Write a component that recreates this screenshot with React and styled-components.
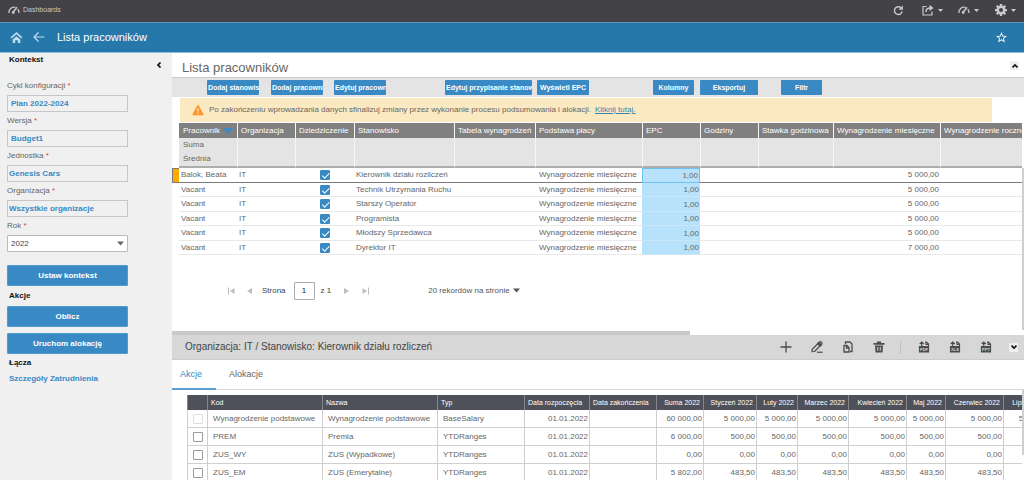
import React, { useState } from "react";
import styled, { createGlobalStyle, css } from "styled-components";
import { MdStarBorder } from "react-icons/md";

const blue = "#3889c4";

const GlobalStyle = createGlobalStyle`
  * {
    box-sizing: border-box;
  }
  body {
    margin: 0;
    background: #fff;
    color: #666;
    font-family: "Liberation Sans", Arial, sans-serif;
    font-size: 8px;
    line-height: 12px;
  }
  button,
  input,
  select {
    font: inherit;
    color: inherit;
    margin: 0;
  }
`;

const contextFields = [
  { id: "cycle", label: "Cykl konfiguracji", value: "Plan 2022-2024" },
  { id: "version", label: "Wersja", value: "Budget1" },
  { id: "unit", label: "Jednostka", value: "Genesis Cars", tight: true },
  {
    id: "organization",
    label: "Organizacja",
    value: "Wszystkie organizacje",
    tight: true,
  },
];

const toolbar = [
  { label: "Dodaj stanowisko", width: 52, gap: 35, cut: true },
  { label: "Dodaj pracownika", width: 52, gap: 12, cut: true },
  { label: "Edytuj pracownika", width: 52, gap: 11, cut: true },
  { label: "Edytuj przypisanie stanowiska", width: 87, gap: 59, cut: true },
  { label: "Wyświetl EPC", width: 52, gap: 5 },
  { label: "Kolumny", width: 41, gap: 64 },
  { label: "Eksportuj", width: 58, gap: 6 },
  { label: "Filtr", width: 41, gap: 23 },
];

const employeeColumns = [
  { name: "Pracownik", width: 58, sorted: true },
  { name: "Organizacja", width: 58 },
  { name: "Dziedziczenie", width: 59 },
  { name: "Stanowisko", width: 100 },
  { name: "Tabela wynagrodzeń", width: 81 },
  { name: "Podstawa płacy", width: 107 },
  { name: "EPC", width: 58 },
  { name: "Godziny", width: 58 },
  { name: "Stawka godzinowa", width: 75 },
  { name: "Wynagrodzenie miesięczne", width: 107 },
  { name: "Wynagrodzenie roczne" },
];

const employees = [
  { name: "Balok, Beata", position: "Kierownik działu rozliczeń", pay: "5 000,00" },
  { name: "Vacant", position: "Technik Utrzymania Ruchu", pay: "5 000,00" },
  { name: "Vacant", position: "Starszy Operator", pay: "5 000,00" },
  { name: "Vacant", position: "Programista", pay: "5 000,00" },
  { name: "Vacant", position: "Młodszy Sprzedawca", pay: "5 000,00" },
  { name: "Vacant", position: "Dyrektor IT", pay: "7 000,00" },
];

const actionColumns = [
  { name: "Kod", width: 115 },
  { name: "Nazwa", width: 115 },
  { name: "Typ", width: 87 },
  { name: "Data rozpoczęcia", width: 65 },
  { name: "Data zakończenia", width: 67 },
  { name: "Suma 2022", width: 47, right: true },
  { name: "Styczeń 2022", width: 53, right: true },
  { name: "Luty 2022", width: 41, right: true },
  { name: "Marzec 2022", width: 51, right: true },
  { name: "Kwiecień 2022", width: 58, right: true },
  { name: "Maj 2022", width: 39, right: true },
  { name: "Czerwiec 2022", width: 58, right: true },
  { name: "Lipiec 2022", right: true },
];

const actions = [
  {
    code: "Wynagrodzenie podstawowe",
    name: "Wynagrodzenie podstawowe",
    type: "BaseSalary",
    sum: "60 000,00",
    month: "5 000,00",
    disabled: true,
  },
  { code: "PREM", name: "Premia", type: "YTDRanges", sum: "6 000,00", month: "500,00" },
  { code: "ZUS_WY", name: "ZUS (Wypadkowe)", type: "YTDRanges", sum: "0,00", month: "0,00" },
  { code: "ZUS_EM", name: "ZUS (Emerytalne)", type: "YTDRanges", sum: "5 802,00", month: "483,50" },
];

const Page = styled.div`
  display: flex;
  flex-direction: column;
  height: 100vh;
  overflow: hidden;
`;

const IconButton = styled.button`
  display: inline-flex;
  align-items: center;
  justify-content: center;
  gap: ${(p) => p.$gap || 0}px;
  width: ${(p) => (p.$width ? `${p.$width}px` : "auto")};
  padding: 0;
  border: 0;
  background: none;
  color: inherit;
  cursor: pointer;

  svg {
    flex: none;
  }
`;

const TopBar = styled.header`
  display: flex;
  flex: none;
  align-items: center;
  justify-content: space-between;
  height: 22px;
  padding: 0 1px 2px 8px;
  background: #434347;
  color: #c9c9c9;
`;

const Brand = styled.a`
  display: flex;
  align-items: center;
  gap: 3px;
  color: inherit;
  font-size: 7px;
  text-decoration: none;
`;

const TopActions = styled.div`
  display: flex;
  align-items: center;
`;

const TitleBar = styled.div`
  display: flex;
  flex: none;
  align-items: center;
  height: 31px;
  padding: 0 16px 1px 10px;
  border-top: 1px solid #5e94b8;
  border-bottom: 1px solid #8fbcd8;
  background: #2678ab;
  color: #fff;

  h1 {
    flex: 1;
    margin: 0 0 0 12px;
    font-size: 11px;
    line-height: 16px;
    font-weight: normal;
  }
`;

const NavButton = styled(IconButton)`
  margin-right: ${(p) => p.$after || 0}px;
  color: #c4dced;
`;

const Body = styled.div`
  display: flex;
  flex: 1;
  min-height: 0;
`;

const Sidebar = styled.aside`
  flex: none;
  width: 172px;
  padding: 1px 7px 0;
  background: #f0f0f0;
`;

const SideHead = styled.div`
  display: flex;
  justify-content: space-between;
  align-items: flex-start;
  height: 23px;
  padding-right: 3px;

  button {
    margin-top: 8px;
    color: #111;
  }
`;

const SideTitle = styled.h2`
  margin: ${(p) => p.$top || 0}px 0 0;
  padding-left: 2px;
  color: #111;
  font-size: 8px;
  line-height: 12px;
  font-weight: bold;
`;

const SideForm = styled.form`
  width: 121px;
`;

const Label = styled.label`
  display: block;
  height: 18px;
  padding: 3px 0;

  span {
    color: #f33;
  }
`;

const TextInput = styled.input`
  display: block;
  width: 100%;
  height: 17px;
  padding: 0 ${(p) => (p.$tight ? 1 : 3)}px;
  border: 1px solid #c6c6c6;
  background: #f0f0f0;
  color: ${blue};
  font-weight: bold;
  outline: 0;
`;

const SelectBox = styled.div`
  position: relative;

  select {
    display: block;
    appearance: none;
    width: 100%;
    height: 17px;
    padding: 0 3px;
    border: 1px solid #b9b9b9;
    border-radius: 1px;
    background: #fff;
    color: #444;
  }

  svg {
    position: absolute;
    right: 4px;
    top: 5px;
    pointer-events: none;
  }
`;

const WideButton = styled.button`
  display: block;
  width: 121px;
  height: 21px;
  margin-top: ${(p) => p.$top}px;
  padding: 0;
  border: 1px solid #4f9dcf;
  border-radius: 1px;
  background: ${blue};
  color: #fff;
  font-weight: bold;
  cursor: pointer;
`;

const SideLink = styled.a`
  display: block;
  margin-top: 4px;
  padding-left: 2px;
  color: ${blue};
  font-weight: bold;
  text-decoration: none;
`;

const Main = styled.main`
  display: flex;
  flex: 1;
  flex-direction: column;
  min-width: 0;
`;

const PanelTitle = styled.div`
  display: flex;
  flex: none;
  align-items: flex-start;
  justify-content: space-between;
  height: 24px;
  padding: 6px 5px 0 10px;

  h2 {
    margin: 0;
    font-size: 13px;
    line-height: 18px;
    font-weight: normal;
  }
`;

const Collapse = styled(IconButton)`
  width: 9px;
  height: 9px;
  margin-top: 2px;
  background: #eee;
  color: #111;
`;

const Toolbar = styled.div`
  display: flex;
  flex: none;
  align-items: center;
  height: 20px;
  border-top: 1px solid #cacaca;
  background: #e4e4e4;
`;

const ToolButton = styled.button`
  flex: none;
  width: ${(p) => p.$width}px;
  height: 15px;
  margin-left: ${(p) => p.$gap}px;
  padding: 0 ${(p) => (p.$cut ? 1 : 0)}px;
  overflow: hidden;
  border: 0;
  border-radius: 1px;
  background: ${blue};
  color: #fff;
  font-size: 7px;
  font-weight: bold;
  line-height: 15px;
  white-space: nowrap;
  text-align: ${(p) => (p.$cut ? "left" : "center")};
  cursor: pointer;
`;

const Banner = styled.div`
  display: flex;
  flex: none;
  align-items: center;
  height: 24px;
  margin: 1px 32px 1px 8px;
  padding-left: 12px;
  background: #fbe9c1;

  svg {
    margin-right: 5px;
  }
  a {
    margin-left: 4px;
    color: #3585b5;
  }
`;

const Scrollable = styled.div`
  display: flex;
  flex: none;
`;

const Clip = styled.div`
  flex: 1;
  min-width: 0;
  overflow: hidden;
`;

const ScrollThumb = styled.div`
  flex: none;
  width: 2px;
  height: ${(p) => p.$height}px;
  margin-top: ${(p) => p.$top}px;
  background: #cfcfcf;
`;

const Table = styled.table`
  width: 100%;
  border-spacing: 0;
  table-layout: fixed;

  th,
  td {
    padding: 0 2px;
    overflow: hidden;
    font-weight: normal;
    text-align: left;
    white-space: nowrap;
  }
`;

const EmployeeTable = styled(Table)`
  thead tr {
    height: 14px;
  }
  thead tr:first-child {
    height: 15px;
  }
  thead th {
    padding: 0 4px;
    background: #808080;
    color: #fff;
  }
  thead td {
    padding: 0 4px;
    background: #e4e4e4;
  }
  thead th + th,
  thead td + td + td {
    border-left: 1px solid #f6f6f6;
    padding-left: 3px;
  }
  thead tr:last-child {
    height: 16px;
  }
  thead tr:last-child td + td {
    border-bottom: 2px solid #adadad;
  }
  thead td:first-child {
    background: #fff;
    padding: 0;
  }
`;

const HeadCell = styled.div`
  display: flex;
  align-items: center;
  justify-content: space-between;
`;

const EmployeeRow = styled.tr`
  height: 14px;

  &:nth-child(2n + 3) {
    height: 15px;
  }
  td {
    border-bottom: 1px solid #e9e9e9;
  }
  td:first-child {
    border-bottom-color: #fff;
  }
  ${(p) =>
    p.$active &&
    css`
      td,
      td:first-child {
        border-bottom: 1px solid #7a7a7a;
      }
      td:first-child {
        border-left: 1px solid #7a7a7a;
        border-top: 1px solid #7a7a7a;
        background: #ffa800;
      }
    `}
  td:nth-child(7) {
    padding-left: 4px;
  }
`;

const CheckCell = styled.td`
  && {
    padding: 0;
    text-align: center;
  }
`;

const NumberCell = styled.td`
  && {
    padding: 0 1px;
    text-align: right;
  }
`;

const EpcCell = styled(NumberCell)`
  && {
    padding-top: 1px;
    background: #b8e2fb;
    border-bottom-color: #c9e6f7;
    ${(p) => p.$active && "border: 1px solid #6dc1f2;"}
  }
`;

const CheckBox = styled.input`
  appearance: none;
  display: block;
  width: 10px;
  height: 10px;
  margin: 0 auto;
  border: 1px solid #9a9a9a;
  border-radius: 1px;
  background: #fff;

  &:disabled {
    border-color: #ddd;
  }
  &:checked {
    border-color: ${blue};
    background: ${blue};
  }
  &:checked::after {
    content: "";
    display: block;
    width: 6px;
    height: 3px;
    margin: 2px 1px;
    border: solid #fff;
    border-width: 0 0 1px 1px;
    transform: rotate(-45deg);
    transform-origin: 50% 40%;
  }
`;

const Pager = styled.nav`
  display: flex;
  flex: none;
  align-items: center;
  height: 76px;
  padding: 0 0 5px 55px;
  color: #444;

  > button {
    color: #bdbdbd;
  }
`;

const PageNumber = styled.input`
  width: 21px;
  height: 18px;
  margin: 0 6px 0 8px;
  padding: 0;
  border: 1px solid #aaa;
  border-radius: 1px;
  color: #222;
  text-align: center;
`;

const PageSize = styled(IconButton)`
  && {
    margin-left: 59px;
    color: #555;
  }
`;

const HorizontalScroll = styled.div`
  flex: none;
  height: 4px;

  div {
    width: 518px;
    max-width: 100%;
    height: 4px;
    background: #c9c9c9;
  }
`;

const DetailBar = styled.div`
  display: flex;
  flex: none;
  align-items: center;
  height: 25px;
  padding-left: 13px;
  border-bottom: 1px solid #cbcbcb;
  background: #d7d7d7;
  color: #4c4c4c;

  h3 {
    flex: 1;
    margin: 0;
    color: #444;
    font-size: 10px;
    line-height: 12px;
    font-weight: normal;
  }
  hr {
    width: 1px;
    height: 13px;
    margin: 0 7px 0 6px;
    border: 0;
    background: #bfbfbf;
  }
`;

const Fold = styled(Collapse)`
  margin: 0 6px 0 8px;
`;

const Tabs = styled.div`
  display: flex;
  flex: none;
  height: 30px;
  border-bottom: 1px solid #d6d6d6;
`;

const Tab = styled.button`
  height: 30px;
  padding: 0 14px 0 8px;
  border: 0;
  border-bottom: 2px solid ${(p) => (p.$active ? "#5a9fd0" : "transparent")};
  background: none;
  color: ${(p) => (p.$active ? blue : "#666")};
  font-size: 9px;
  cursor: pointer;

  & + & {
    padding-left: 13px;
  }
`;

const DetailArea = styled(Scrollable)`
  flex: 1;
  min-height: 0;
  padding-left: 15px;
`;

const ActionTable = styled(Table)`
  min-width: 864px;
  margin-top: 5px;

  thead tr {
    height: 15px;
  }
  tbody tr {
    height: 18px;
  }
  th {
    padding: 0 3px;
    border-left: 1px solid #85868c;
    background: #4f515a;
    color: #fff;
    font-size: 7px;
  }
  td {
    padding: 0 6px 0 5px;
    border-left: 1px solid #cfcfcf;
    border-bottom: 1px solid #cfcfcf;
  }
`;

const ActionHead = styled.th`
  && {
    text-align: ${(p) => (p.$right ? "right" : "left")};
  }
`;

const Caret = ({ size = 5 }) => (
  <svg width={size} height={size} viewBox="0 0 10 10" fill="currentColor">
    <path d="M0 2h10L5 8z" />
  </svg>
);

const Gauge = ({ size = 12 }) => (
  <svg
    width={size}
    height={size}
    viewBox="0 0 24 24"
    fill="none"
    stroke="currentColor"
    strokeWidth="2.6"
  >
    <path d="M2 18a10 10 0 0 1 13-11" />
    <path d="M19.5 10.5A11 11 0 0 1 22 18" />
    <path d="M18 6.5 10.5 16" strokeWidth="3" />
    <circle cx="10.5" cy="17" r="1.5" fill="currentColor" />
  </svg>
);

const Refresh = () => (
  <svg
    width="11"
    height="11"
    viewBox="0 0 24 24"
    fill="none"
    stroke="currentColor"
    strokeWidth="3"
  >
    <path d="M20 14a8.500 8.500 0 1 1-2.500-8" />
    <path d="M21.500 1v9.500H12z" fill="currentColor" stroke="none" />
  </svg>
);

const Gear = () => (
  <svg width="12" height="12" viewBox="0 0 24 24" fill="none" stroke="currentColor">
    <circle cx="12" cy="12" r="6.500" strokeWidth="5" />
    <path
      d="M12 0v5M12 19v5M0 12h5M19 12h5M3.500 3.500 7 7M17 17l3.500 3.500M3.500 20.500 7 17M17 7l3.500-3.500"
      strokeWidth="4.500"
    />
  </svg>
);

const Home = () => (
  <svg width="13" height="13" viewBox="0 0 24 24">
    <path
      d="M2 12.5 12 4l10 8.5"
      fill="none"
      stroke="currentColor"
      strokeWidth="3"
    />
    <path d="M5 15.5 12 9.5l7 6V22h-4.500v-5h-5v5H5z" fill="currentColor" />
  </svg>
);

const BackArrow = () => (
  <svg
    width="12"
    height="12"
    viewBox="0 0 24 24"
    fill="none"
    stroke="currentColor"
    strokeWidth="2.4"
  >
    <path d="M23 12H3M11 3l-9 9 9 9" />
  </svg>
);

const Share = () => (
  <svg
    width="12"
    height="12"
    viewBox="0 0 24 24"
    fill="none"
    stroke="currentColor"
    strokeWidth="2.4"
  >
    <path d="M9 5H2v17h18v-7" />
    <path d="M8 16c0-6 3-8 8-8" strokeWidth="3" />
    <path d="M15 1.500 23 8l-8 6z" fill="currentColor" stroke="none" />
  </svg>
);

const Chevron = ({ turn = 0 }) => (
  <svg
    width="6"
    height="6"
    viewBox="0 0 12 12"
    fill="none"
    stroke="currentColor"
    strokeWidth="3.4"
    transform={`rotate(${turn})`}
  >
    <path d="M1 9l5-5 5 5" />
  </svg>
);

const Warning = () => (
  <svg width="12" height="12" viewBox="0 0 24 24">
    <path
      d="M12 3 22 21H2z"
      fill="#ff942b"
      stroke="#ff942b"
      strokeWidth="2.500"
      strokeLinejoin="round"
    />
    <path d="M12 8.500v6.500M12 17v2.400" stroke="#fff" strokeWidth="2.200" />
  </svg>
);

const PageArrow = ({ back, edge }) => (
  <svg
    width={edge ? 7 : 5}
    height="8"
    viewBox={edge ? "0 0 14 16" : "0 0 10 16"}
    fill="currentColor"
    transform={back ? undefined : "rotate(180)"}
  >
    {edge ? <path d="M0 1h2v14H0zM13 2v12L4 8z" /> : <path d="M10 2v12L0 8z" />}
  </svg>
);

const Plus = () => (
  <svg width="12" height="12" viewBox="0 0 24 24" stroke="currentColor" strokeWidth="2.600">
    <path d="M12 1v22M1 12h22" />
  </svg>
);

const Pencil = () => (
  <svg
    width="12"
    height="12"
    viewBox="0 0 24 24"
    fill="none"
    stroke="currentColor"
    strokeWidth="2.400"
    strokeLinejoin="round"
  >
    <path d="M2.500 16.500 16.500 2.500a2.800 2.800 0 0 1 4.500 4.500L7 21l-5 .500z" />
    <path d="m16 3 4.500 4.500-2.500 2.500-5-5z" fill="currentColor" />
    <path d="M12 22.500h11" />
  </svg>
);

const CopyFile = () => (
  <svg
    width="12"
    height="12"
    viewBox="0 0 24 24"
    fill="none"
    stroke="currentColor"
    strokeWidth="2.600"
  >
    <path d="M7 6V2h9l4 4v15h-4" />
    <path d="M4 9h6l4 4v9H4z" />
    <path d="M9 9v5h5" />
  </svg>
);

const Trash = () => (
  <svg width="12" height="12" viewBox="0 0 24 24" fill="currentColor">
    <path d="M8 1h8v3h7v3.500H1V4h7z" />
    <path
      fillRule="evenodd"
      d="M4 9h16l-1 14H5zM8.500 12v7.500h2V12zM13.500 12v7.500h2V12z"
    />
  </svg>
);

const FileExport = ({ kind }) => (
  <svg
    width="12"
    height="12"
    viewBox="0 0 24 24"
    fill="none"
    stroke="currentColor"
    strokeWidth="2.400"
  >
    <path d="M7.500 10V2M3.500 6l4-4 4 4" />
    <path d="M14 2h3l4 4v5" />
    <path d="M16 2v5h5" />
    <path d="M3 11h18v11H3z" fill="currentColor" />
    <text
      x="12"
      y="19"
      fill="#d7d7d7"
      stroke="none"
      fontSize="8"
      fontWeight="bold"
      textAnchor="middle"
    >
      {kind}
    </text>
  </svg>
);

function ContextPanel() {
  return (
    <Sidebar>
      <SideHead>
        <SideTitle>Kontekst</SideTitle>
        <IconButton aria-label="Zwiń">
          <Chevron turn={-90} />
        </IconButton>
      </SideHead>
      <SideForm onSubmit={(e) => e.preventDefault()}>
        {contextFields.map((field) => (
          <div key={field.id}>
            <Label htmlFor={field.id}>
              {field.label} <span>*</span>
            </Label>
            <TextInput
              id={field.id}
              defaultValue={field.value}
              $tight={field.tight}
              readOnly
            />
          </div>
        ))}
        <Label htmlFor="year">
          Rok <span>*</span>
        </Label>
        <SelectBox>
          <select id="year" defaultValue="2022">
            <option>2022</option>
            <option>2023</option>
            <option>2024</option>
          </select>
          <Caret size={7} />
        </SelectBox>
        <WideButton type="submit" $top={13}>
          Ustaw kontekst
        </WideButton>
      </SideForm>
      <SideTitle $top={4}>Akcje</SideTitle>
      <WideButton $top={4}>Oblicz</WideButton>
      <WideButton $top={6}>Uruchom alokację</WideButton>
      <SideTitle $top={3}>Łącza</SideTitle>
      <SideLink href="#details">Szczegóły Zatrudnienia</SideLink>
    </Sidebar>
  );
}

function EmployeeGrid() {
  return (
    <Scrollable>
      <Clip>
        <EmployeeTable>
          <colgroup>
            <col width="7" />
            {employeeColumns.map((c) => (
              <col key={c.name} width={c.width} />
            ))}
          </colgroup>
          <thead>
            <tr>
              <td />
              {employeeColumns.map((c) => (
                <th key={c.name}>
                  {c.sorted ? (
                    <HeadCell>
                      {c.name}
                      <svg width="10" height="6" viewBox="0 0 10 6" fill={blue}>
                        <path d="M0 0h10L5 6z" />
                      </svg>
                    </HeadCell>
                  ) : (
                    c.name
                  )}
                </th>
              ))}
            </tr>
            {["Suma", "Średnia"].map((total) => (
              <tr key={total}>
                <td />
                {employeeColumns.map((c, i) => (
                  <td key={c.name}>{i === 0 && total}</td>
                ))}
              </tr>
            ))}
          </thead>
          <tbody>
            {employees.map((e, i) => (
              <EmployeeRow key={e.position} $active={i === 0}>
                <td />
                <td>{e.name}</td>
                <td>IT</td>
                <CheckCell>
                  <CheckBox
                    type="checkbox"
                    aria-label={`Dziedziczenie: ${e.position}`}
                    defaultChecked
                  />
                </CheckCell>
                <td>{e.position}</td>
                <td />
                <td>Wynagrodzenie miesięczne</td>
                <EpcCell $active={i === 0}>1,00</EpcCell>
                <td />
                <td />
                <NumberCell>{e.pay}</NumberCell>
                <td />
              </EmployeeRow>
            ))}
          </tbody>
        </EmployeeTable>
        <Pager>
          <IconButton aria-label="Pierwsza strona" $width={9}>
            <PageArrow back edge />
          </IconButton>
          <IconButton aria-label="Poprzednia strona" $width={26}>
            <PageArrow back />
          </IconButton>
          <label htmlFor="page">Strona</label>
          <PageNumber id="page" defaultValue="1" />
          <span>z 1</span>
          <IconButton aria-label="Następna strona" $width={31}>
            <PageArrow />
          </IconButton>
          <IconButton aria-label="Ostatnia strona" $width={7}>
            <PageArrow edge />
          </IconButton>
          <PageSize $gap={3}>
            20 rekordów na stronie <Caret size={7} />
          </PageSize>
        </Pager>
      </Clip>
      <ScrollThumb $top={45} $height={162} />
    </Scrollable>
  );
}

function ActionGrid() {
  return (
    <DetailArea>
      <Clip>
        <ActionTable>
          <colgroup>
            <col width="20" />
            {actionColumns.map((c) => (
              <col key={c.name} width={c.width} />
            ))}
          </colgroup>
          <thead>
            <tr>
              <th />
              {actionColumns.map((c) => (
                <ActionHead key={c.name} $right={c.right}>
                  {c.name}
                </ActionHead>
              ))}
            </tr>
          </thead>
          <tbody>
            {actions.map((a) => (
              <tr key={a.code}>
                <CheckCell>
                  <CheckBox type="checkbox" aria-label={a.code} disabled={a.disabled} />
                </CheckCell>
                <td>{a.code}</td>
                <td>{a.name}</td>
                <td>{a.type}</td>
                <NumberCell>01.01.2022</NumberCell>
                <td />
                <NumberCell>{a.sum}</NumberCell>
                {actionColumns.slice(6).map((c) => (
                  <NumberCell key={c.name}>{a.month}</NumberCell>
                ))}
              </tr>
            ))}
          </tbody>
        </ActionTable>
      </Clip>
      <ScrollThumb $top={0} $height={65} />
    </DetailArea>
  );
}

function App() {
  const [tab, setTab] = useState("Akcje");

  return (
    <>
      <GlobalStyle />
      <Page>
        <TopBar>
          <Brand href="#dashboards">
            <Gauge />
            Dashboards
          </Brand>
          <TopActions>
            <IconButton aria-label="Odśwież" $width={31}>
              <Refresh />
            </IconButton>
            <IconButton aria-label="Udostępnij" $width={36} $gap={4}>
              <Share />
              <Caret />
            </IconButton>
            <IconButton aria-label="Pulpity" $width={37} $gap={4}>
              <Gauge />
              <Caret />
            </IconButton>
            <IconButton aria-label="Ustawienia" $width={36} $gap={4}>
              <Gear />
              <Caret />
            </IconButton>
          </TopActions>
        </TopBar>
        <TitleBar>
          <NavButton aria-label="Start" $after={10}>
            <Home />
          </NavButton>
          <NavButton aria-label="Wstecz">
            <BackArrow />
          </NavButton>
          <h1>Lista pracowników</h1>
          <IconButton aria-label="Ulubione">
            <MdStarBorder size={13} />
          </IconButton>
        </TitleBar>
        <Body>
          <ContextPanel />
          <Main>
            <PanelTitle>
              <h2>Lista pracowników</h2>
              <Collapse aria-label="Zwiń panel">
                <Chevron />
              </Collapse>
            </PanelTitle>
            <Toolbar>
              {toolbar.map((b) => (
                <ToolButton key={b.label} $width={b.width} $gap={b.gap} $cut={b.cut}>
                  {b.label}
                </ToolButton>
              ))}
            </Toolbar>
            <Banner>
              <Warning />
              Po zakończeniu wprowadzania danych sfinalizuj zmiany przez
              wykonanie procesu podsumowania i alokacji.
              <a href="#run">Kliknij tutaj.</a>
            </Banner>
            <EmployeeGrid />
            <HorizontalScroll>
              <div />
            </HorizontalScroll>
            <DetailBar>
              <h3>Organizacja: IT / Stanowisko: Kierownik działu rozliczeń</h3>
              <IconButton aria-label="Dodaj" $width={31}>
                <Plus />
              </IconButton>
              <IconButton aria-label="Edytuj" $width={31}>
                <Pencil />
              </IconButton>
              <IconButton aria-label="Kopiuj" $width={31}>
                <CopyFile />
              </IconButton>
              <IconButton aria-label="Usuń" $width={31}>
                <Trash />
              </IconButton>
              <hr />
              {["PDF", "XLS", "PPT"].map((kind) => (
                <IconButton key={kind} aria-label={`Eksport ${kind}`} $width={31}>
                  <FileExport kind={kind} />
                </IconButton>
              ))}
              <Fold aria-label="Rozwiń panel">
                <Chevron turn={180} />
              </Fold>
            </DetailBar>
            <Tabs>
              {["Akcje", "Alokacje"].map((name) => (
                <Tab key={name} $active={tab === name} onClick={() => setTab(name)}>
                  {name}
                </Tab>
              ))}
            </Tabs>
            <ActionGrid />
          </Main>
        </Body>
      </Page>
    </>
  );
}

export default App;
